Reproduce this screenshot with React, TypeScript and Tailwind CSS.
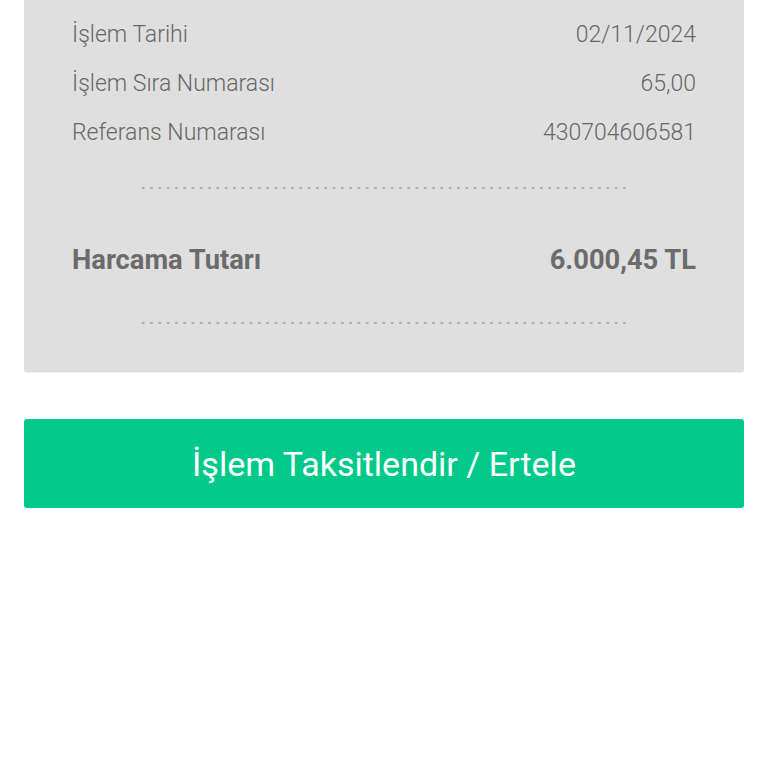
import React from "react";

const rows = [
  { label: "İşlem Tarihi", value: "02/11/2024" },
  { label: "İşlem Sıra Numarası", value: "65,00" },
  { label: "Referans Numarası", value: "430704606581" },
];

function Dots() {
  return (
    <div className="mx-auto h-[2px] w-[490px] bg-[radial-gradient(circle,#acacac_1px,transparent_1.3px)] bg-[length:8.3px_2px] bg-repeat-x" />
  );
}

export default function App() {
  return (
    <div className="min-h-[768px] bg-white px-6 font-['Roboto',sans-serif]">
      {/* receipt card */}
      <div className="rounded-b-[3px] bg-[#dfdfdf] px-12 pt-[11px] pb-12 shadow-[0_1px_1px_rgba(0,0,0,0.06)]">
        {rows.map((r) => (
          <div
            key={r.label}
            className="flex h-[49px] items-center justify-between text-[23px] font-light text-[#676767]"
          >
            <span>{r.label}</span>
            <span>{r.value}</span>
          </div>
        ))}

        <div className="mt-[29px]">
          <Dots />
        </div>

        <div className="mt-[48px] flex h-[46px] items-center justify-between text-[27.3px] font-bold text-[#6b6b6b]">
          <span>Harcama Tutarı</span>
          <span>6.000,45 TL</span>
        </div>

        <div className="mt-[39px]">
          <Dots />
        </div>
      </div>

      {/* action */}
      <button className="mt-[47px] flex h-[89px] w-full items-center justify-center rounded-[3px] bg-[#00c98a] pt-[2px] text-[34px] font-normal text-white">
        İşlem Taksitlendir / Ertele
      </button>
    </div>
  );
}
